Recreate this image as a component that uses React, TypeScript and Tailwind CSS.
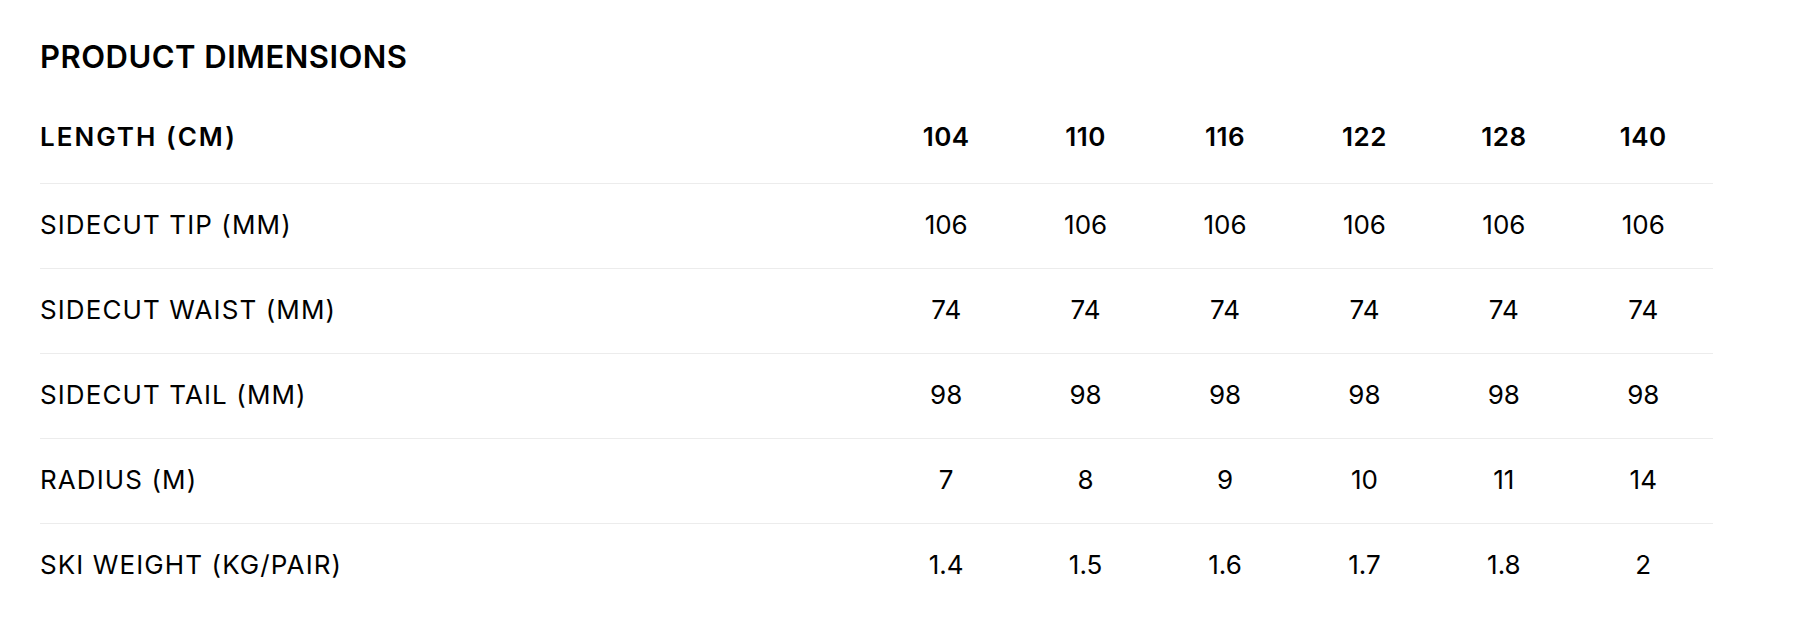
const lengths = ['104', '110', '116', '122', '128', '140'];

const rows: { label: string; values: string[] }[] = [
  { label: 'SIDECUT TIP (MM)', values: ['106', '106', '106', '106', '106', '106'] },
  { label: 'SIDECUT WAIST (MM)', values: ['74', '74', '74', '74', '74', '74'] },
  { label: 'SIDECUT TAIL (MM)', values: ['98', '98', '98', '98', '98', '98'] },
  { label: 'RADIUS (M)', values: ['7', '8', '9', '10', '11', '14'] },
  { label: 'SKI WEIGHT (KG/PAIR)', values: ['1.4', '1.5', '1.6', '1.7', '1.8', '2'] },
];

export default function App() {
  return (
    <div className="min-h-[623px] bg-white px-[40px] pt-[37px] text-black font-['Inter',sans-serif]">
      <h2 className="text-[31px] font-semibold leading-[40px] tracking-[0.5px]">PRODUCT DIMENSIONS</h2>

      <div className="w-[1673px]">
        {/* Header row */}
        <div className="grid h-[107px] grid-cols-12 items-center border-b border-[#ececec] pt-[12px] text-[26px] font-semibold">
          <div className="col-span-6 tracking-[2px]">LENGTH (CM)</div>
          {lengths.map((l) => (
            <div key={l} className="text-center tracking-[0.5px]">{l}</div>
          ))}
        </div>

        {rows.map((row, idx) => (
          <div
            key={row.label}
            className={`grid h-[85px] grid-cols-12 items-center pb-[4px] text-[26px] font-normal ${
              idx < rows.length - 1 ? 'border-b border-[#ececec]' : ''
            }`}
          >
            <div className="col-span-6 tracking-[1.1px]">{row.label}</div>
            {row.values.map((v, i) => (
              <div key={i} className="text-center">{v}</div>
            ))}
          </div>
        ))}
      </div>
    </div>
  );
}
